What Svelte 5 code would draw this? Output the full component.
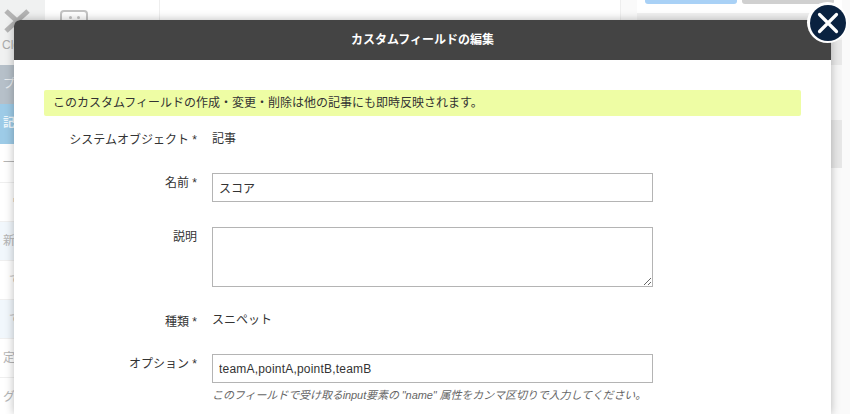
<script>
  const sideRows = [
    { text: "プ", kind: "dark" },
    { text: "記", kind: "active" },
    { text: "一", kind: "" },
    { text: "ウ", kind: "sub" },
    { text: "新", kind: "tint" },
    { text: "で", kind: "tint-sub white" },
    { text: "で", kind: "tint-sub" },
    { text: "定", kind: "" },
    { text: "グ", kind: "" }
  ];
</script>

<div class="page">
  <aside class="sidebar">
    <div class="logo">
      <svg width="30" height="30" viewBox="0 0 30 30">
        <path d="M4 6 L26 26 M26 6 L4 26" stroke="#b4b4b4" stroke-width="5" fill="none" />
      </svg>
      <span>Close</span>
    </div>
    {#each sideRows as row}
      <div class="side-row {row.kind}">{row.text}</div>
    {/each}
  </aside>

  <div class="list-col">
    <div class="tool-icon"><i></i><i></i></div>
  </div>
  <div class="main-col"></div>

  <div class="right-col">
    <div class="actions">
      <div class="btn blue"></div>
      <div class="btn grey"></div>
    </div>
    <div class="panel-band"></div>
    <div class="panel-head"></div>
    <div class="panel-gap"></div>
    <div class="panel-head second"></div>
    <div class="box one"></div>
    <div class="box two"></div>
    <div class="box three"></div>
  </div>
</div>

<div class="modal">
  <header class="modal-head">カスタムフィールドの編集</header>
  <div class="modal-body">
    <p class="notice">このカスタムフィールドの作成・変更・削除は他の記事にも即時反映されます。</p>

    <div class="row static first">
      <div class="label">システムオブジェクト *</div>
      <div class="value">記事</div>
    </div>
    <div class="row">
      <div class="label">名前 *</div>
      <div class="field"><input type="text" value="スコア" /></div>
    </div>
    <div class="row">
      <div class="label">説明</div>
      <div class="field"><textarea></textarea></div>
    </div>
    <div class="row static kind">
      <div class="label">種類 *</div>
      <div class="value">スニペット</div>
    </div>
    <div class="row">
      <div class="label">オプション *</div>
      <div class="field">
        <input class="latin" type="text" value="teamA,pointA,pointB,teamB" />
        <p class="hint">このフィールドで受け取るinput要素の "name" 属性をカンマ区切りで入力してください。</p>
      </div>
    </div>
  </div>
</div>

<button class="close" aria-label="閉じる">
  <svg width="40" height="40" viewBox="0 0 40 40">
    <circle cx="20" cy="20" r="18" fill="#0a2240" />
    <path d="M11.5 11.5 L28.5 28.5 M28.5 11.5 L11.5 28.5" stroke="#fff" stroke-width="3.2" stroke-linecap="round" fill="none" />
  </svg>
</button>

<style>
  :global(body) {
    margin: 0;
    height: 414px;
    overflow: hidden;
    background: #fff;
    font-family: "Liberation Sans", "Noto Sans CJK JP", sans-serif;
  }
  .page {
    display: flex;
    height: 414px;
    overflow: hidden;
  }
  .sidebar {
    width: 45px;
    flex: none;
    overflow: hidden;
    background: #fff;
  }
  .logo {
    height: 65px;
    box-sizing: border-box;
    background: #f0f1f1;
    padding: 5px 0 0 2px;
    color: #aaa;
    font-size: 12px;
    white-space: nowrap;
    line-height: 14px;
  }
  .logo svg {
    display: block;
    margin-bottom: 3px;
  }
  .side-row {
    height: 39px;
    box-sizing: border-box;
    border-bottom: 1px solid #efefef;
    padding-left: 3px;
    font-size: 12px;
    line-height: 38px;
    color: #b5b5b5;
  }
  .dark {
    background: #b6c0c9;
    color: #e8ecef;
    border-bottom: 0;
  }
  .active {
    background: #9dcbe7;
    color: #eef7fc;
    font-weight: bold;
    height: 40px;
    border-bottom: 0;
  }
  .sub {
    padding-left: 12px;
  }
  .tint {
    background: #f1f7fc;
  }
  .tint-sub {
    background: #f1f7fc;
    padding-left: 9px;
  }
  .white {
    background: #fff;
  }
  .list-col {
    width: 115px;
    flex: none;
    box-sizing: border-box;
    border-right: 1px solid #eee;
  }
  .tool-icon {
    width: 28px;
    height: 24px;
    box-sizing: border-box;
    margin: 10px 0 0 15px;
    border: 2px solid #c4c4c4;
    border-radius: 4px;
    display: flex;
    justify-content: center;
    gap: 5px;
    padding-top: 4px;
  }
  .tool-icon i {
    width: 3px;
    height: 3px;
    border-radius: 50%;
    background: #c4c4c4;
  }
  .main-col {
    width: 460px;
    flex: none;
    border-right: 1px solid #eee;
  }
  .right-col {
    flex: 1;
    background: #fafafa;
    padding-left: 16px;
    overflow: hidden;
  }
  .actions {
    display: flex;
    gap: 5px;
    height: 13px;
    width: 205px;
    box-sizing: border-box;
    padding: 0 0 0 8px;
    background: #fff;
  }
  .btn {
    width: 92px;
    height: 4px;
    border-radius: 0 0 3px 3px;
  }
  .blue {
    background: #a9d1f6;
  }
  .grey {
    background: #d0d0d0;
  }
  .panel-band {
    width: 205px;
    height: 27px;
    background: #f1f1f1;
  }
  .panel-head {
    width: 205px;
    height: 25px;
    background: #e9e9e9;
  }
  .panel-gap {
    width: 205px;
    height: 55px;
    background: #f6f6f6;
  }
  .panel-head.second {
    height: 48px;
    background: #e7e7e7;
  }
  .box {
    width: 193px;
    box-sizing: border-box;
    background: #fff;
    border: 1px solid #dcdcdc;
    border-radius: 3px;
    margin-bottom: 9px;
  }
  .box.one {
    margin-top: 9px;
    height: 35px;
  }
  .box.two {
    height: 36px;
  }
  .box.three {
    height: 200px;
  }
  .modal {
    position: absolute;
    left: 14px;
    top: 20px;
    width: 817px;
    height: 394px;
    overflow: hidden;
    background: #fff;
    border-radius: 6px 6px 0 0;
    box-shadow: 0 0 10px rgba(0, 0, 0, 0.28);
  }
  .modal-head {
    height: 40px;
    background: #444;
    color: #fff;
    font-size: 12px;
    font-weight: bold;
    line-height: 40px;
    text-align: center;
  }
  .modal-body {
    padding: 30px 30px 0;
    font-size: 12px;
    color: #333;
  }
  .notice {
    margin: 0 0 14px;
    height: 26px;
    line-height: 26px;
    padding-left: 9px;
    background: #eefda4;
    border-radius: 2px;
  }
  .row {
    display: grid;
    grid-template-columns: 153px 441px;
    column-gap: 15px;
    margin-bottom: 25px;
  }
  .label {
    text-align: right;
    line-height: 18px;
    padding-top: 1px;
  }
  .value {
    line-height: 18px;
  }
  .first {
    margin-bottom: 24px;
  }
  .kind {
    margin-top: -1px;
    margin-bottom: 23px;
  }
  .kind .label {
    padding-top: 2px;
  }
  input,
  textarea {
    display: block;
    width: 100%;
    box-sizing: border-box;
    margin: 0;
    border: 1px solid #b4b4b4;
    border-radius: 0;
    background: #fff;
    color: #333;
    font-family: inherit;
    font-size: 12px;
    padding: 0 6px;
    outline: none;
  }
  input {
    height: 29px;
  }
  input.latin {
    letter-spacing: 0.2px;
  }
  textarea {
    height: 60px;
    padding-top: 5px;
  }
  .hint {
    margin: 4px 0 0;
    font-size: 11px;
    letter-spacing: -0.09px;
    line-height: 16px;
    font-style: italic;
    color: #666;
  }
  .close {
    position: absolute;
    left: 807px;
    top: 2px;
    width: 41px;
    height: 41px;
    padding: 0;
    border: 0;
    border-radius: 50%;
    background: #fff;
    display: flex;
    align-items: center;
    justify-content: center;
  }
  .close svg {
    display: block;
  }
</style>
